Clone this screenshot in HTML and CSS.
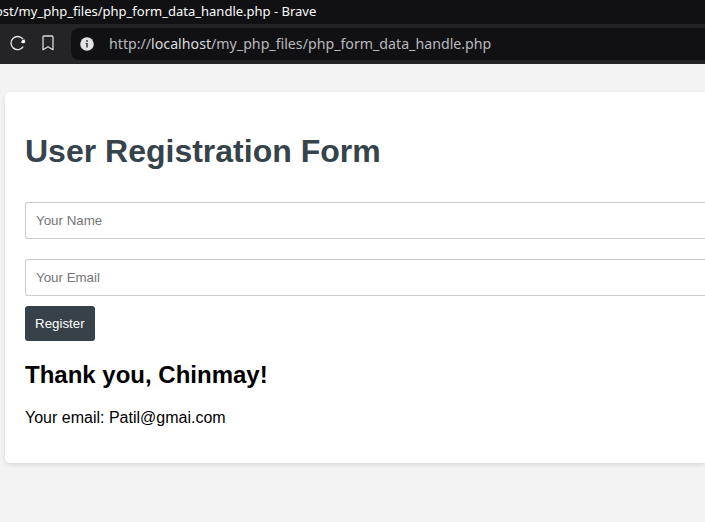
FILE: index.html
```html
<!DOCTYPE html>
<html lang="en">
<head>
<meta charset="utf-8">
<title>User Registration Form</title>
<link rel="stylesheet" href="styles.css">
</head>
<body>
<div class="titlebar"><span class="window-title">ost/my_php_files/php_form_data_handle.php - Brave</span></div>
<header class="toolbar">
  <svg class="reload" width="18" height="18" viewBox="0 0 18 18" fill="none" stroke="#e4e4e7" stroke-width="1.4"><path d="M14.2 12.6A6.6 6.6 0 1 1 14 5.2"/><path d="M15.2 5.3Q16.4 6.4 16.3 8.6Q14.3 9.8 12.6 9Q11.7 7.7 13 6.6Z" fill="#fff" stroke="none"/></svg>
  <svg class="bookmark" width="12" height="16" viewBox="0 0 12 16" fill="none" stroke="#d8d8dc" stroke-width="1.3" stroke-linejoin="round"><path d="M2.2 1H9.8Q11 1 11 2.2V14.7L6 11.7L1 14.7V2.2Q1 1 2.2 1Z"/></svg>
  <div class="address">
    <svg class="info" width="14" height="14" viewBox="0 0 14 14"><circle cx="7" cy="7" r="6.8" fill="#e4e4e7"/><path d="M6.1 3.3h1.7v1.6H6.1zM5.6 6h2.2v4.5H6.2V7.1h-.6z" fill="#3c3c40"/></svg>
    <span class="url">http://<span class="host">localhost</span>/my_php_files/php_form_data_handle.php</span>
  </div>
</header>
<main class="card">
  <h1>User Registration Form</h1>
  <form>
    <input type="text" placeholder="Your Name">
    <input type="email" placeholder="Your Email">
    <button type="button">Register</button>
  </form>
  <h2>Thank you, Chinmay!</h2>
  <p>Your email: Patil@gmai.com</p>
</main>
</body>
</html>
```
FILE: styles.css
```css
* { box-sizing: border-box; }
body { margin: 0; height: 522px; overflow: hidden; background: #f3f3f3; font-family: "Liberation Sans", Arial, sans-serif; font-size: 16px; }
.titlebar { height: 24px; background: #111113; color: #fcfcfc; font: 13px/22px "Noto Sans", sans-serif; white-space: nowrap; overflow: hidden; }
.window-title { margin-left: -5px; }
.toolbar { height: 40px; background: #242328; display: flex; align-items: center; padding-left: 9px; }
.toolbar svg { flex: none; }
.reload { margin-top: -2px; }
.bookmark { margin: -2px 0 0 15px; }
.address { flex: 1; height: 32px; margin-left: 17px; background: #111113; border-radius: 8px 0 0 8px; display: flex; align-items: center; padding-left: 9px; }
.url { margin-left: 15px; color: #b9b9bd; font: 14.2px/20px "Noto Sans", sans-serif; white-space: nowrap; }
.host { color: #dcdcdf; }
.card { height: 371px; margin: 28px 0 0 5px; padding: 20px 0 20px 20px; background: #fff; border-radius: 5px 0 0 5px; box-shadow: 0 2px 5px rgba(0,0,0,.1); }
h1 { margin: 21px 0 32px; font-size: 32px; line-height: 37px; color: #36434b; }
input { display: block; width: 100%; height: 37px; padding: 10px; margin: 0 0 20px; border: 1px solid #ccc; border-right: 0; border-radius: 3px 0 0 3px; font: 13.333px "Liberation Sans", Arial, sans-serif; }
input + button { display: block; margin-top: -10px; height: 35px; padding: 10px; border: 0; border-radius: 3px; background: #364149; color: #fff; font: 13.333px "Liberation Sans", Arial, sans-serif; }
h2 { margin: 20px 0; font-size: 24px; line-height: 28px; }
p { margin: 0; line-height: 18px; }
```
